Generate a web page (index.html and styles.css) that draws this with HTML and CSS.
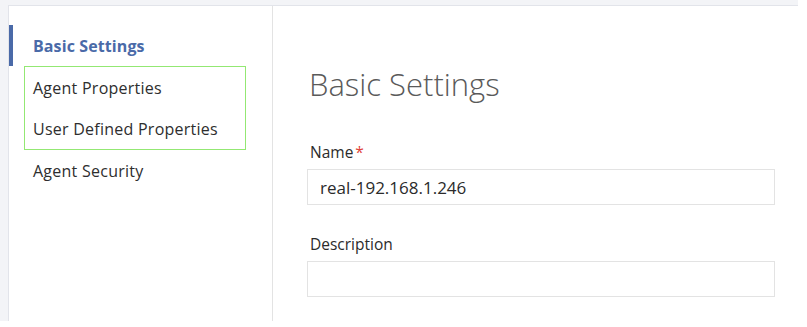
FILE: index.html
```html
<!DOCTYPE html>
<html lang="en">
<head>
  <meta charset="UTF-8">
  <title>Agent Settings</title>
  <link rel="stylesheet" href="styles.css">
</head>
<body>
  <div class="frame">
    <nav class="sidebar">
      <a class="nav-item active">Basic Settings</a>
      <div class="highlight">
        <a class="nav-item">Agent Properties</a>
        <a class="nav-item">User Defined Properties</a>
      </div>
      <a class="nav-item">Agent Security</a>
    </nav>

    <main class="content">
      <h1>Basic Settings</h1>

      <label class="field-label">Name<span class="req">*</span></label>
      <input class="field" type="text" value="real-192.168.1.246">

      <label class="field-label">Description</label>
      <input class="field" type="text">
    </main>
  </div>
</body>
</html>
```

FILE: styles.css
```css
html { background: white; }

body {
  margin: 0;
  width: 798px;
  height: 321px;
  background: #f3f4f7;
  font-family: "Open Sans", "Noto Sans", sans-serif;
  color: #2b2b2b;
}

.frame {
  display: flex;
  margin: 5px 0 0 8px;
  width: 790px;
  height: 316px;
  background: white;
  border-top: 1px solid #e2e4ea;
  border-left: 1px solid #e2e4ea;
}

.sidebar {
  width: 263px;
  padding-top: 19px;
  border-right: 1px solid #e3e3e3;
}

.nav-item {
  display: flex;
  align-items: center;
  height: 42px;
  padding-left: 24px;
  font-size: 16px;
  letter-spacing: 0.25px;
  color: #2e2e2e;
}

.nav-item.active {
  height: 41px;
  padding-left: 20px;
  border-left: 4px solid #4a6aa8;
  color: #4a6aa8;
  font-weight: 700;
  letter-spacing: 0.1px;
}

.highlight {
  margin-left: 15px;
  width: 220px;
  border: 1.5px solid #93e873;
}

.highlight .nav-item {
  height: 41px;
  padding-left: 8px;
}

.content {
  flex: 1;
  padding-left: 37px;
}

.content h1 {
  margin: 58px 0 38px -1px;
  font-size: 31px;
  font-weight: 300;
  color: #5a5a5a;
  line-height: 40px;
}

.field-label {
  display: block;
  font-size: 15.5px;
  line-height: 20px;
  color: #2b2b2b;
  margin-bottom: 7px;
}

.req {
  color: #e0433a;
  margin-left: 2px;
}

.field {
  display: block;
  box-sizing: border-box;
  width: 468px;
  height: 36px;
  margin: 0 0 29px -3px;
  padding: 0 12px;
  border: 1px solid #e3e3e3;
  font-family: inherit;
  font-size: 17px;
  color: #2b2b2b;
  outline: none;
}
```
